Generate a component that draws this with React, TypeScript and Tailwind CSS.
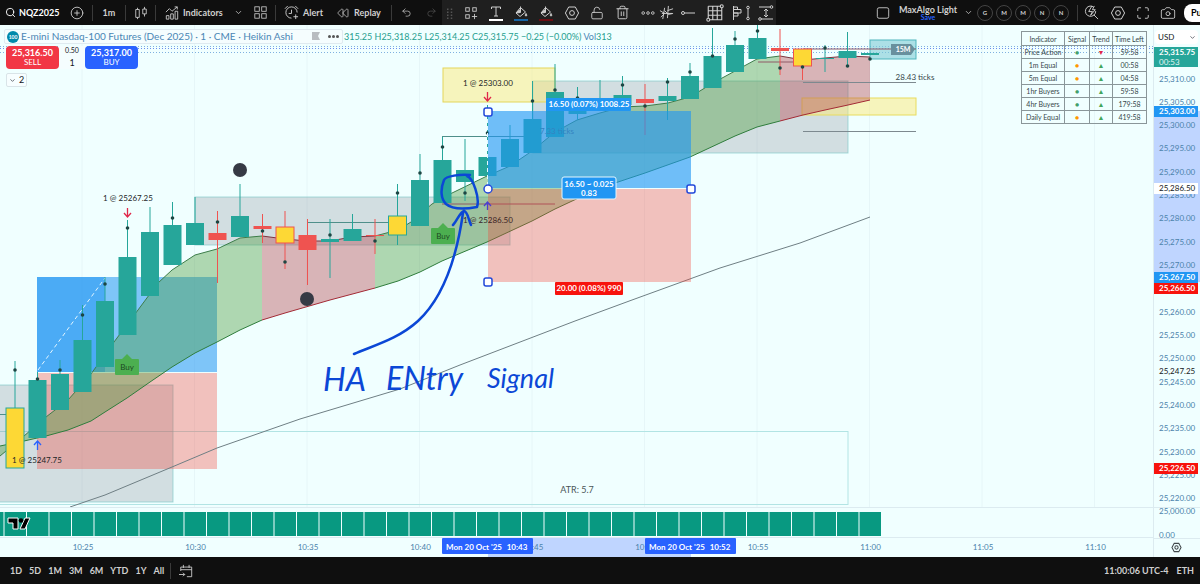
import type { ReactNode } from "react";
import { Camera, ChevronDown, CirclePlus, LockOpen, Maximize, Redo2, Rewind, Search, Trash2, Undo2 } from "lucide-react";

const TEAL = "#26a69a";
const RED = "#ef5350";
const YELLOW = "#fdd835";
const INK = "#0b47d6";

// x of the nth one-minute bar, and y of a price
const barX = (i: number) => 15 + i * 22.5;
const priceY = (p: number) => Math.round(78.5 + (25310 - p) * 4.664);

type Candle = {
    top: number;
    bottom: number;
    high: number;
    low?: number;
    dot?: number;
    fill?: string;
    stroke?: string;
};

const candles: Candle[] = [
    { top: 408, bottom: 468, high: 361, dot: 370, fill: YELLOW, stroke: TEAL },
    { top: 380, bottom: 438, high: 372, dot: 379 },
    { top: 374, bottom: 410, high: 360, dot: 370 },
    { top: 340, bottom: 392, high: 305, dot: 315 },
    { top: 301, bottom: 367, high: 277, dot: 284 },
    { top: 257, bottom: 335, high: 220, dot: 228 },
    { top: 232, bottom: 296, high: 207 },
    { top: 225, bottom: 265, high: 202, dot: 218 },
    { top: 223, bottom: 245, high: 197 },
    { top: 233, bottom: 240, high: 211, low: 283, dot: 222, fill: RED },
    { top: 216, bottom: 237, high: 184 },
    { top: 226, bottom: 229, high: 214, low: 243, dot: 231, fill: RED },
    { top: 227, bottom: 243, high: 211, low: 269, dot: 262, fill: YELLOW, stroke: RED },
    { top: 235, bottom: 250, high: 219, low: 285, fill: RED },
    { top: 239, bottom: 242, high: 219, low: 278, dot: 235 },
    { top: 229, bottom: 241, high: 214 },
    { top: 235, bottom: 236, high: 219, low: 254, dot: 241, fill: RED },
    { top: 216, bottom: 235, high: 184, low: 245, dot: 193, fill: YELLOW, stroke: TEAL },
    { top: 180, bottom: 226, high: 154, dot: 173 },
    { top: 160, bottom: 203, high: 137, dot: 147 },
    { top: 170, bottom: 182, high: 139, low: 201, dot: 193 },
    { top: 157, bottom: 176, high: 105, dot: 133 },
    { top: 139, bottom: 167, high: 125 },
    { top: 119, bottom: 153, high: 81, dot: 101 },
    { top: 92, bottom: 137, high: 64, dot: 90 },
    { top: 103, bottom: 114, high: 87, low: 120, dot: 98 },
    { top: 102, bottom: 108, high: 80 },
    { top: 95, bottom: 105, high: 76, dot: 85 },
    { top: 99, bottom: 103, high: 84, low: 135, dot: 106, fill: RED },
    { top: 96, bottom: 101, high: 78, low: 120, dot: 82 },
    { top: 76, bottom: 99, high: 63, dot: 72 },
    { top: 56, bottom: 88, high: 28, dot: 56 },
    { top: 45, bottom: 72, high: 31, dot: 39 },
    { top: 38, bottom: 59, high: 25, dot: 31 },
    { top: 48, bottom: 51, high: 29, low: 75, dot: 68, fill: RED },
    { top: 49, bottom: 66, high: 49, low: 80, dot: 67, fill: YELLOW, stroke: RED },
    { top: 58, bottom: 58, high: 45, low: 72, dot: 48 },
    { top: 51, bottom: 58, high: 32, low: 66, dot: 66 },
    { top: 53, bottom: 55, high: 53, dot: 59 },
];

type Point = [number, number];

const upper: Point[] = [
    [0, 456], [24, 436], [46, 417], [68, 400], [91, 374], [114, 342], [138, 310], [158, 283], [172, 270], [195, 255],
    [217, 249], [240, 238], [262, 236], [285, 239], [307, 241], [330, 241], [352, 237], [375, 236], [398, 230], [411, 222],
    [432, 204], [450, 194], [487, 176], [510, 166], [532, 151], [555, 132], [577, 120], [600, 113], [622, 107], [645, 106],
    [668, 103], [690, 97], [713, 83], [735, 71], [757, 59], [780, 56], [803, 60], [825, 58], [848, 56], [870, 57],
];

const lower: Point[] = [
    [0, 446], [24, 441], [46, 436], [68, 430], [91, 421], [105, 412], [127, 398], [150, 382], [172, 367], [195, 353],
    [217, 342], [240, 330], [262, 320], [285, 313], [330, 300], [375, 288], [398, 281], [420, 272], [442, 261], [487, 242],
    [532, 221], [555, 209], [600, 188], [645, 173], [690, 157], [735, 136], [757, 127], [780, 121], [803, 115], [825, 110],
    [848, 105], [870, 100],
];

const average: Point[] = [
    [70, 507], [105, 495], [172, 467], [217, 448], [300, 419], [400, 389], [460, 365], [575, 321], [632, 300], [720, 268], [800, 243], [870, 217],
];

const trends = [
    { from: 0, to: 262, up: true },
    { from: 262, to: 375, up: false },
    { from: 375, to: 780, up: true },
    { from: 780, to: 870, up: false },
];

const indicators = [
    { name: "Price Action", signal: "text-[#43a06b]", up: false, left: "59:58" },
    { name: "1m Equal", signal: "text-[#ff9800]", up: true, left: "00:58" },
    { name: "5m Equal", signal: "text-[#ff9800]", up: true, left: "04:58" },
    { name: "1hr Buyers", signal: "text-[#43a06b]", up: true, left: "59:58" },
    { name: "4hr Buyers", signal: "text-[#43a06b]", up: true, left: "179:58" },
    { name: "Daily Equal", signal: "text-[#ff9800]", up: true, left: "419:58" },
];

const join = (pts: Point[]) => pts.map((p) => p.join(",")).join(" ");
const between = (pts: Point[], a: number, b: number) => pts.filter(([x]) => x >= a && x <= b);

function Icon({ size = 16, children }: { size?: number; children: ReactNode }) {
    return (
        <svg className="shrink-0" width={size} height={size} viewBox="0 0 16 16" fill="none" stroke="currentColor" strokeWidth="1" aria-hidden="true">
            {children}
        </svg>
    );
}

function Tool({ label, width, children }: { label: string; width: string; children: ReactNode }) {
    return (
        <button type="button" aria-label={label} className={`${width} h-full shrink-0 flex items-center justify-center gap-1 hover:bg-white/10`}>
            {children}
        </button>
    );
}

function Divider() {
    return <span className="w-px h-4 shrink-0 bg-[#3a3a3a]" />;
}

const HexIcon = () => (
    <Icon>
        <path d="M4.7 2h6.6l3.3 6-3.3 6H4.7L1.4 8z" />
        <circle cx="8" cy="8" r="2.4" />
    </Icon>
);

function BucketIcon({ color }: { color: string }) {
    return (
        <Icon>
            <path d="M7.5 2.5l5 4.500-5.500 4.500-4-3.500zM7.500 7V1.500" />
            <path d="M3 8l3.500-3 1 2.500z" fill="currentColor" />
            <path d="M13 8.500c1 1.500 1 2.500 0 2.500s-1-1 0-2.500z" fill="currentColor" />
            <path d="M1 15h14" stroke={color} strokeWidth="2" />
        </Icon>
    );
}

function DrawingTools() {
    return (
        <div className="flex items-center h-full w-[334px] shrink-0 bg-[#1f1f1f]">
            <Tool label="Move toolbar" width="w-4">
                <Icon size={12}>
                    <path d="M5 2v2M5 6v2M5 10v2M5 14v2M10 2v2M10 6v2M10 10v2M10 14v2" stroke="#555" strokeWidth="2" />
                </Icon>
            </Tool>
            <Tool label="Templates" width="w-[25px]">
                <Icon size={14}>
                    <rect x="2" y="2" width="4" height="4" />
                    <rect x="10" y="2" width="4" height="4" />
                    <rect x="2" y="10" width="4" height="4" />
                    <path d="M12 9v6M9 12h6" />
                </Icon>
            </Tool>
            <Tool label="Text colour" width="w-[25px]">
                <Icon>
                    <path d="M3.500 4V2h9v2M8 2v9M6 11h4" />
                    <path d="M1 15h14" stroke="#fff" strokeWidth="2" />
                </Icon>
            </Tool>
            <Tool label="Target colour" width="w-[25px]"><BucketIcon color="#1665a5" /></Tool>
            <Tool label="Stop colour" width="w-[26px]"><BucketIcon color="#6b0d12" /></Tool>
            <Tool label="Drawing settings" width="w-[25px]"><HexIcon /></Tool>
            <Tool label="Lock" width="w-[26px]"><LockOpen size={14} strokeWidth={1.500} /></Tool>
            <Tool label="Remove" width="w-[25px]"><Trash2 size={15} strokeWidth={1.500} /></Tool>
            <Tool label="More" width="w-[25px]">
                <Icon size={14}>
                    <circle cx="2.500" cy="8" r="1.500" />
                    <circle cx="8" cy="8" r="1.500" />
                    <circle cx="13.500" cy="8" r="1.500" />
                </Icon>
            </Tool>
            <Tool label="Trend tool" width="w-[12px]">
                <Icon size={15}>
                    <path d="M6 3l-2 12M10 1L9 14M1 6l5 3-4 4M6 6l4 4 5-1M9 6l6-2M3 9h11" />
                </Icon>
            </Tool>
            <Tool label="Horizontal ray" width="w-[32px]">
                <Icon>
                    <circle cx="3" cy="8" r="1.500" />
                    <path d="M4.500 8H15" />
                </Icon>
            </Tool>
            <Tool label="Grid" width="w-[22px]">
                <Icon size={18}>
                    <path d="M2 2h10.500M14 3.500V14H3.500M2 2v10.500M6 2v12M10 2v12M2 6h12M2 10h12" />
                    <circle cx="14" cy="2" r="1.300" />
                    <circle cx="2" cy="14" r="1.300" />
                </Icon>
            </Tool>
            <Tool label="Volume profile" width="w-[30px]">
                <svg width="18" height="16" viewBox="0 0 18 16" fill="none" stroke="currentColor" aria-hidden="true">
                    <path d="M1.500 1v14M1.500 2h4v2.500h-4M1.500 4.500H9V8H1.500M1.500 8H6v3H1.500M16 4v8" />
                    <circle cx="16" cy="2.500" r="1.300" />
                    <circle cx="16" cy="13.500" r="1.300" />
                </svg>
            </Tool>
            <Tool label="Price range" width="w-[20px]">
                <Icon>
                    <path d="M1 2h11M3 14h12M8 4v8M6 6l2-2 2 2M6 10l2 2 2-2" />
                    <circle cx="13.500" cy="2" r="1.300" />
                    <circle cx="2" cy="14" r="1.300" />
                </Icon>
            </Tool>
        </div>
    );
}

function TopBar() {
    return (
        <header className="flex items-center h-[25px] overflow-hidden bg-[#0f0f0f] text-[#cfcfcf] text-[9px] font-bold">
            <button type="button" className="flex items-center gap-[3px] w-[62px] pl-[5px] h-full shrink-0 text-white">
                <Search size={11} strokeWidth={2} /> NQZ2025
            </button>
            <Tool label="Compare symbols" width="w-[30px]"><CirclePlus size={14} strokeWidth={1.500} /></Tool>
            <Divider />
            <button type="button" className="w-8 h-full shrink-0">1m</button>
            <Divider />
            <Tool label="Bar style" width="w-[29px]">
                <Icon size={14}>
                    <path d="M2 4h4v9H2zM4 2v2M4 13v2M10 3.500h4V9h-4zM12 1v2.500M12 9v3" />
                </Icon>
            </Tool>
            <Divider />
            <button type="button" className="flex items-center gap-1 w-[70px] pl-[9px] h-full shrink-0">
                <Icon size={14}>
                    <path d="M1.500 15v-4h3v4zM6.500 15V9h3v6zM11.500 15V6h3v9zM1 7l4-4 3 3 6-5M11 1h3v3" />
                </Icon>
                Indicators
            </button>
            <Tool label="Favourite indicators" width="w-[25px]"><ChevronDown size={9} /></Tool>
            <Tool label="Indicator templates" width="w-[18px]">
                <Icon size={13}>
                    <rect x="1" y="1" width="5.500" height="5.500" />
                    <rect x="9.500" y="1" width="5.500" height="5.500" />
                    <rect x="1" y="9.500" width="5.500" height="5.500" />
                    <rect x="9.500" y="9.500" width="5.500" height="5.500" />
                </Icon>
            </Tool>
            <span className="w-[6px] shrink-0" />
            <Divider />
            <button type="button" className="flex items-center gap-1 w-[53px] pl-2 h-full shrink-0">
                <Icon size={15}>
                    <path d="M14 8A6 6 0 1 0 8 14M8 5v4H5M1 4l3-3M12 1l3 3M12.500 10v5M10 12.500h5" />
                </Icon>
                Alert
            </button>
            <button type="button" className="flex items-center gap-[5px] w-[62px] pl-2 h-full shrink-0">
                <Rewind size={12} strokeWidth={1.500} /> Replay
            </button>
            <Divider />
            <Tool label="Undo" width="w-[29px]"><Undo2 size={11} strokeWidth={1.500} /></Tool>
            <Tool label="Redo" width="w-[21px]"><Redo2 size={11} strokeWidth={1.500} className="text-[#555]" /></Tool>
            <DrawingTools />
            <div className="flex items-center h-full ml-auto shrink-0">
                <Tool label="Layout" width="w-[26px]">
                    <Icon size={14}><rect x="1.500" y="2" width="13" height="12" rx="2" /></Icon>
                </Tool>
                <button type="button" className="flex flex-col items-center w-[64px] leading-[9px]">
                    <span>MaxAlgo Light</span>
                    <span className="text-[7px] leading-[7px] text-[#2962ff]">Save</span>
                </button>
                <Tool label="Manage layouts" width="w-[17px]"><ChevronDown size={9} /></Tool>
                <div className="flex gap-[3px]">
                    {["G", "M", "M", "N", "N"].map((letter, i) => (
                        <button key={i} type="button" className="size-4 rounded-full border border-[#444] text-[6px] leading-[6px]">
                            {letter}
                        </button>
                    ))}
                </div>
                <span className="w-2 shrink-0" />
                <Divider />
                <Tool label="Quick search" width="w-[27px]">
                    <Icon size={15}>
                        <path d="M10 2A5.500 5.500 0 1 0 12.500 6.500M10.500 10.500L15 15M8.500 1L5 7h4l-2 4 5-6H9l2-4" />
                    </Icon>
                </Tool>
                <Tool label="Settings" width="w-[25px]"><HexIcon /></Tool>
                <Tool label="Fullscreen" width="w-[25px]"><Maximize size={14} strokeWidth={1.500} /></Tool>
                <Tool label="Snapshot" width="w-[25px]"><Camera size={16} strokeWidth={1.300} /></Tool>
                <button type="button" aria-label="Publish" className="ml-1 w-4 h-[18px] pl-[7px] rounded-l-lg bg-white text-black text-left overflow-hidden">
                    Pu
                </button>
            </div>
        </header>
    );
}

function Handle({ x, y, round }: { x: number; y: number; round?: boolean }) {
    return <rect x={x - 4} y={y - 4} width="8" height="8" rx={round ? 4 : 2} fill="#fff" stroke="#2147d9" strokeWidth="1.500" />;
}

function BuyFlag({ x, y }: { x: number; y: number }) {
    return (
        <g>
            <path d={`M${x} ${y - 5}l5 5h6a1 1 0 0 1 1 1v14a1 1 0 0 1-1 1h-22a1 1 0 0 1-1-1v-14a1 1 0 0 1 1-1h6z`} fill="#4caf50" />
            <text x={x} y={y + 11} fontSize="8" textAnchor="middle" fill="#1d4a22">Buy</text>
        </g>
    );
}

function PriceChart() {
    return (
        <svg className="block w-full" height="482" role="img" aria-label="NQ one minute Heikin Ashi chart">
            <g transform="translate(0 -25)">
                {[0, 1, 2, 3, 4, 5, 6, 7, 8, 9].map((k) => (
                    <line key={k} x1={82 + k * 112.5} x2={82 + k * 112.5} y1="25" y2="507" stroke="#e6f6f8" />
                ))}
                <g stroke="#7fb1e0" strokeDasharray="1 2">
                    <line x1="0" x2="100%" y1="46.500" y2="46.500" />
                    <line x1="0" x2="100%" y1="48.500" y2="48.500" stroke="#6d8df0" />
                    <line x1="0" x2="100%" y1="52.500" y2="52.500" />
                </g>

                {/* Zones */}
                <rect x="-2" y="431.500" width="850" height="73" fill="none" stroke="#b2e4e4" />
                <g fill="#787b86" fillOpacity="0.25" stroke="#7ac4c4" strokeOpacity="0.6">
                    <rect x="-2" y="385" width="175" height="117" />
                    <rect x="195" y="197" width="315" height="48" />
                    <rect x="533" y="81" width="315" height="72" />
                </g>
                <rect x="443" y="68" width="112" height="34" fill="#fbe97a" fillOpacity="0.5" stroke="#e3d65a" />
                <rect x="802" y="98" width="114" height="17" fill="#fbe97a" fillOpacity="0.5" stroke="#e8dc5e" />
                <rect x="870" y="40" width="46" height="19" fill="#7fcbd6" fillOpacity="0.6" stroke="#4eb5bd" />

                {/* First position */}
                <rect x="37" y="277" width="180" height="95" fill="#2196f3" fillOpacity="0.55" />
                <rect x="37" y="277" width="68" height="95" fill="#2196f3" fillOpacity="0.55" />
                <rect x="37" y="373" width="180" height="96" fill="#f44336" fillOpacity="0.33" />
                <line x1="38" y1="370" x2="105" y2="278" stroke="#e4f6ff" strokeDasharray="4 3" />

                {/* Band */}
                {trends.map((t) => {
                    const hi = between(upper, t.from, t.to);
                    const lo = between(lower, t.from, t.to);
                    return (
                        <g key={t.from}>
                            <polygon points={join([...hi, ...[...lo].reverse()])} fill={t.up ? "#4c9a3c" : "#b5434a"} fillOpacity="0.4" />
                            <polyline points={join(hi)} fill="none" stroke={t.up ? "#3d7d4a" : "#7d3540"} />
                            <polyline points={join(lo)} fill="none" stroke={t.up ? "#2f7d3c" : "#a32a35"} />
                        </g>
                    );
                })}
                <polyline points={join(average)} fill="none" stroke="#6f7f84" />

                {/* Levels */}
                <g stroke="#4f8f8a">
                    <path d="M307.500 235V222.500H398M442 136.500H533M0 414.500H8" fill="none" />
                    <path d="M803 82.500H916M803 131.500H916" stroke="#7d898f" />
                    <path d="M803 49H916M758 62H803M442 204H555" stroke="#8f5a66" />
                </g>

                {candles.map((c, i) => {
                    const x = barX(i);
                    return (
                        <g key={i}>
                            <line x1={x} x2={x} y1={c.high} y2={c.low ?? c.bottom} stroke={c.stroke ?? c.fill ?? TEAL} />
                            <rect x={x - 9} y={c.top} width="18" height={Math.max(c.bottom - c.top, 1)} fill={c.fill ?? TEAL} stroke={c.stroke} />
                            {c.dot && <circle cx={x} cy={c.dot} r="1.800" fill="#1d4643" />}
                        </g>
                    );
                })}
                <circle cx="240" cy="170" r="7" fill="#363a45" />
                <circle cx="307" cy="299" r="7" fill="#363a45" />
                <BuyFlag x={127} y={359} />
                <BuyFlag x={443} y={228} />

                {/* Order marks */}
                <g fontSize="8" textAnchor="middle" fill="#1c2426">
                    <text x="128" y="201">1 @ 25267.25</text>
                    <text x="37" y="463">1 @ 25247.75</text>
                    <text x="488" y="86">1 @ 25303.00</text>
                    <text x="577" y="493" fontSize="9" fill="#4a5558">ATR: 5.7</text>
                    <text x="915" y="80" fill="#37474a">28.43 ticks</text>
                    <text x="557" y="134" fill="#53636b">7.33 ticks</text>
                </g>
                <g fill="none" strokeWidth="1.300">
                    <path d="M127.500 208v9M124 213l3.500 4 3.500-4M487.500 92v9M484 97l3.500 4 3.500-4" stroke="#e0284a" />
                    <path d="M37.500 450v-8M34 445l3.500-4 3.500 4" stroke="#2962ff" />
                </g>
                <path d="M891 44h20l4 5-4 6h-20z" fill="#68909d" />
                <text x="903" y="52" fontSize="7" textAnchor="middle" fontWeight="700" fill="#fff">15M</text>

                {/* Selected position */}
                <rect x="488" y="111" width="203" height="77" fill="#2196f3" fillOpacity="0.62" />
                <rect x="488" y="189" width="203" height="93" fill="#f44336" fillOpacity="0.33" />
                <text x="488" y="223" fontSize="8" textAnchor="middle" fill="#3a2426">1 @ 25286.50</text>
                <line x1="487.500" x2="487.500" y1="112" y2="188" stroke="#e4f6ff" strokeDasharray="4 3" />
                <path d="M487.500 210v-8M484 206l3.500-4 3.500 4" fill="none" stroke="#4b3fd0" strokeWidth="1.300" />
                <Handle x={488} y={112} />
                <Handle x={488} y={189} round />
                <Handle x={691} y={189} />
                <Handle x={488} y={282} />
                <g fontSize="8" fontWeight="700" textAnchor="middle">
                    <rect x="546" y="98" width="85" height="13" rx="1" fill="#2196f3" />
                    <text x="589" y="107" fill="#fff">16.50 (0.07%) 1008.25</text>
                    <rect x="562" y="177" width="54" height="22" rx="2" fill="#2196f3" stroke="#e4f6ff" />
                    <text x="589" y="187" fill="#fff">16.50 ~ 0.025</text>
                    <text x="589" y="196" fill="#fff">0.83</text>
                    <rect x="555" y="282" width="68" height="13" rx="1" fill="#f7130d" />
                    <text x="589" y="291" fill="#fff">20.00 (0.08%) 990</text>
                </g>

                {/* Pen notes */}
                <path
                    d="M470 175C460 174 446 176 444 180C440 190 441 199 446 204C453 210 466 209 477 207C480 198 473 178 467 176M354 354C375 345 398 339 418 321C445 296 457 255 463 213M453 225C457 221 460 212 464 211C468 212 468 219 471 225"
                    fill="none" stroke={INK} strokeWidth="2.500" strokeLinecap="round" strokeLinejoin="round"
                />
                <g fill={INK} fontSize="32" fontStyle="italic">
                    <text x="323" y="391">HA</text>
                    <text x="386" y="390">ENtry</text>
                    <text x="487" y="388" fontSize="27">Signal</text>
                </g>
            </g>
        </svg>
    );
}

function VolumePane() {
    return (
        <div className="relative h-[31px] border-y border-[#dcebf0]">
            <svg className="block w-full h-full" aria-hidden="true">
                {Array.from({ length: 40 }, (_, i) => (
                    <rect key={i} x={barX(i) - 33} y="4" width="21.500" height="24" fill="#089981" />
                ))}
            </svg>
            <svg className="absolute left-[7px] top-[9px]" width="24" height="14" viewBox="0 0 24 14" role="img" aria-label="TradingView">
                <path d="M1 1h10v11H6V6H1zM18 1h5l-5 11h-5z" fill="#000" stroke="#fff" />
                <circle cx="14" cy="3.500" r="2.300" fill="#000" />
            </svg>
        </div>
    );
}

function TimeAxis() {
    const times = ["10:25", "10:30", "10:35", "10:40", "10:45", "10:50", "10:55", "11:00", "11:05", "11:10"];
    return (
        <svg className="block w-full" height="19" fontSize="8" textAnchor="middle" role="img" aria-label="Time scale">
            <rect x="488" y="0" width="203" height="19" fill="#bfd5ff" />
            {times.map((t, k) => (
                <text key={t} x={83 + k * 112.5} y="12" fill="#4b82ab">{t}</text>
            ))}
            <rect x="442" y="0" width="91" height="16" rx="1" fill="#2962ff" />
            <rect x="645" y="0" width="91" height="16" rx="1" fill="#2962ff" />
            <g fontWeight="700" fill="#fff">
                <text x="474" y="12">Mon 20 Oct &apos;25</text>
                <text x="517" y="12">10:43</text>
                <text x="677" y="12">Mon 20 Oct &apos;25</text>
                <text x="720" y="12">10:52</text>
            </g>
        </svg>
    );
}

function PriceTag({ y, label, fill, color = "#fff" }: { y: number; label: string; fill: string; color?: string }) {
    return (
        <g>
            <rect x="0" y={y - 6} width="44" height="11" fill={fill} />
            <text x="5" y={y + 2} fill={color} fontWeight={color === "#fff" ? 700 : 400}>{label}</text>
        </g>
    );
}

function PriceAxis() {
    const ticks = Array.from({ length: 19 }, (_, i) => 25310 - i * 5).filter((p) => p !== 25265);
    return (
        <aside className="relative w-[47px] shrink-0 border-l border-[#dcebf0]">
            <svg className="block w-full" height="532" fontSize="8" role="img" aria-label="Price scale">
                <g transform="translate(0 -25)">
                    <rect x="0" y="111" width="47" height="171" fill="#bfd5ff" />
                    {ticks.map((p) => (
                        <text key={p} x="5" y={priceY(p) + 3} fill="#4b82ab">{p.toLocaleString("en-US")}.00</text>
                    ))}
                    <text x="5" y="514" fill="#4b82ab">25,000.00</text>
                    <text x="5" y="538" fill="#4b82ab">0.00</text>
                    <line x1="0" x2="47" y1="507.500" y2="507.500" stroke="#dcebf0" />
                    <line x1="0" x2="47" y1="538.500" y2="538.500" stroke="#dcebf0" />
                    <rect x="0" y="47" width="44" height="20" fill={TEAL} />
                    <text x="5" y="55" fill="#fff" fontWeight="700">25,315.75</text>
                    <text x="5" y="65" fill="#e2f5f2">00:53</text>
                    <PriceTag y={112} label="25,303.00" fill="#2196f3" />
                    <PriceTag y={189} label="25,286.50" fill="#fff" color="#131722" />
                    <PriceTag y={278} label="25,267.50" fill="#2196f3" />
                    <PriceTag y={289} label="25,266.50" fill="#f7130d" />
                    <PriceTag y={372} label="25,247.25" fill="#f0ffff" color="#131722" />
                    <PriceTag y={469} label="25,226.50" fill="#f7130d" />
                </g>
            </svg>
            <label className="absolute left-px top-[5px] flex items-center w-[43px] h-[14px] rounded-sm bg-white">
                <select aria-label="Currency" className="appearance-none w-full h-full pl-[3px] text-[8px] leading-[14px] text-[#131722]">
                    <option>USD</option>
                </select>
                <ChevronDown size={7} className="absolute right-0.5 pointer-events-none text-[#131722]" />
            </label>
            <button type="button" aria-label="Scale settings" className="absolute left-[17px] bottom-1 text-[#40474a]">
                <Icon size={11}>
                    <path d="M4.700 2h6.600l3.300 6-3.300 6H4.700L1.400 8z" strokeWidth="1.500" />
                    <circle cx="8" cy="8" r="2.400" strokeWidth="1.500" />
                </Icon>
            </button>
        </aside>
    );
}

function Legend() {
    return (
        <div className="absolute left-1 top-1 flex flex-col items-start">
            <div className="flex items-center gap-px">
                <div className="flex items-center h-[15px] w-[339px] pl-0.5 rounded-xs border border-[#dfeaf0] bg-[#f5fdfe]">
                    <span className="size-3 shrink-0 rounded-full bg-[#0089ab] text-white text-[5px] leading-[12px] text-center font-bold">100</span>
                    <span className="ml-0.5 text-[10px] leading-[13px] whitespace-nowrap text-[#4a86b5]">
                        E-mini Nasdaq-100 Futures (Dec 2025) · 1 · CME · Heikin Ashi
                    </span>
                    <svg className="ml-auto shrink-0" width="9" height="9" viewBox="0 0 9 9" aria-hidden="true">
                        <path d="M1 0h8L7 4l2 4H1z" fill="#b8bcc0" />
                    </svg>
                    <button type="button" aria-label="More" className="flex shrink-0 gap-px ml-2 mr-[3px]">
                        <span className="size-[3px] rounded-full bg-[#555]" />
                        <span className="size-[3px] rounded-full bg-[#555]" />
                        <span className="size-[3px] rounded-full bg-[#555]" />
                    </button>
                </div>
                <p className="text-[9px] leading-[13px] whitespace-pre text-[#26a08f]">
                    315.25 H25,318.25 L25,314.25 C25,315.75 −0.25 (−0.00%) <span className="text-[#4a86b5]">Vol</span>313
                </p>
            </div>
            <div className="flex mt-0.5 ml-0.5 text-white text-[9px] leading-[10px]">
                <button type="button" className="w-[53px] h-[23px] rounded-sm bg-[#f23645]">
                    <b className="block">25,316.50</b>
                    <span className="block text-[8px] leading-[9px]">SELL</span>
                </button>
                <div className="w-[26px] text-center text-[#131722] bg-[#f5fdfe]">
                    <p className="text-[7px] leading-[8px]">0.50</p>
                    <p className="mt-1">1</p>
                </div>
                <button type="button" className="w-[53px] h-[23px] rounded-sm bg-[#2962ff]">
                    <b className="block">25,317.00</b>
                    <span className="block text-[8px] leading-[9px]">BUY</span>
                </button>
            </div>
            <button type="button" className="flex items-center justify-center gap-[3px] mt-1 ml-0.5 w-[21px] h-[14px] rounded-xs border border-[#d9e4e8] bg-[#f7feff] text-[9px] text-[#131722]">
                <ChevronDown size={7} /> 2
            </button>
        </div>
    );
}

function IndicatorTable() {
    return (
        <table className="absolute right-[6px] top-[6px] w-[126px] table-fixed border-collapse text-center text-[7px] leading-[12px] text-[#37474a]">
            <thead>
                <tr className="h-[14px]">
                    <th className="w-[43px] border border-[#8a9699] font-normal">Indicator</th>
                    <th className="w-[25px] border border-[#8a9699] font-normal">Signal</th>
                    <th className="w-[23px] border border-[#8a9699] font-normal">Trend</th>
                    <th className="border border-[#8a9699] font-normal">Time Left</th>
                </tr>
            </thead>
            <tbody>
                {indicators.map((row) => (
                    <tr key={row.name} className="h-[13px]">
                        <td className="border border-[#8a9699] whitespace-nowrap">{row.name}</td>
                        <td className={`border border-[#8a9699] ${row.signal}`}>●</td>
                        <td className={`border border-[#8a9699] ${row.up ? "text-[#43a55b]" : "text-[#e0284a]"}`}>{row.up ? "▲" : "▼"}</td>
                        <td className="border border-[#8a9699]">{row.left}</td>
                    </tr>
                ))}
            </tbody>
        </table>
    );
}

function BottomBar() {
    return (
        <footer className="flex items-center h-[27px] bg-[#0f0f0f] text-[#cfcfcf] text-[9px] font-bold">
            <nav aria-label="Date range" className="flex items-center gap-[7px] pl-[10px]">
                {["1D", "5D", "1M", "3M", "6M", "YTD", "1Y", "All"].map((range) => (
                    <button key={range} type="button">{range}</button>
                ))}
            </nav>
            <span className="ml-[6px] w-px h-4 bg-[#3a3a3a]" />
            <button type="button" aria-label="Go to date" className="ml-2">
                <Icon size={14}>
                    <path d="M2 8V3.500h12.500v11H9M2 6.500h12.500M5 1v3.500M11.500 1v3.500M0 12h6.500M4.500 10l2 2-2 2" />
                </Icon>
            </button>
            <div className="flex gap-2 ml-auto pr-[6px]">
                <button type="button">11:00:06 UTC-4</button>
                <button type="button">ETH</button>
            </div>
        </footer>
    );
}

export default function App() {
    return (
        <div className="min-h-screen flex flex-col bg-[#0f0f0f] font-['Lato','Open_Sans',sans-serif]">
            <TopBar />
            <main className="flex flex-1 bg-[#f0ffff]">
                <div className="relative flex-1 min-w-0 overflow-hidden">
                    <PriceChart />
                    <VolumePane />
                    <TimeAxis />
                    <Legend />
                    <IndicatorTable />
                </div>
                <PriceAxis />
            </main>
            <BottomBar />
        </div>
    );
}
